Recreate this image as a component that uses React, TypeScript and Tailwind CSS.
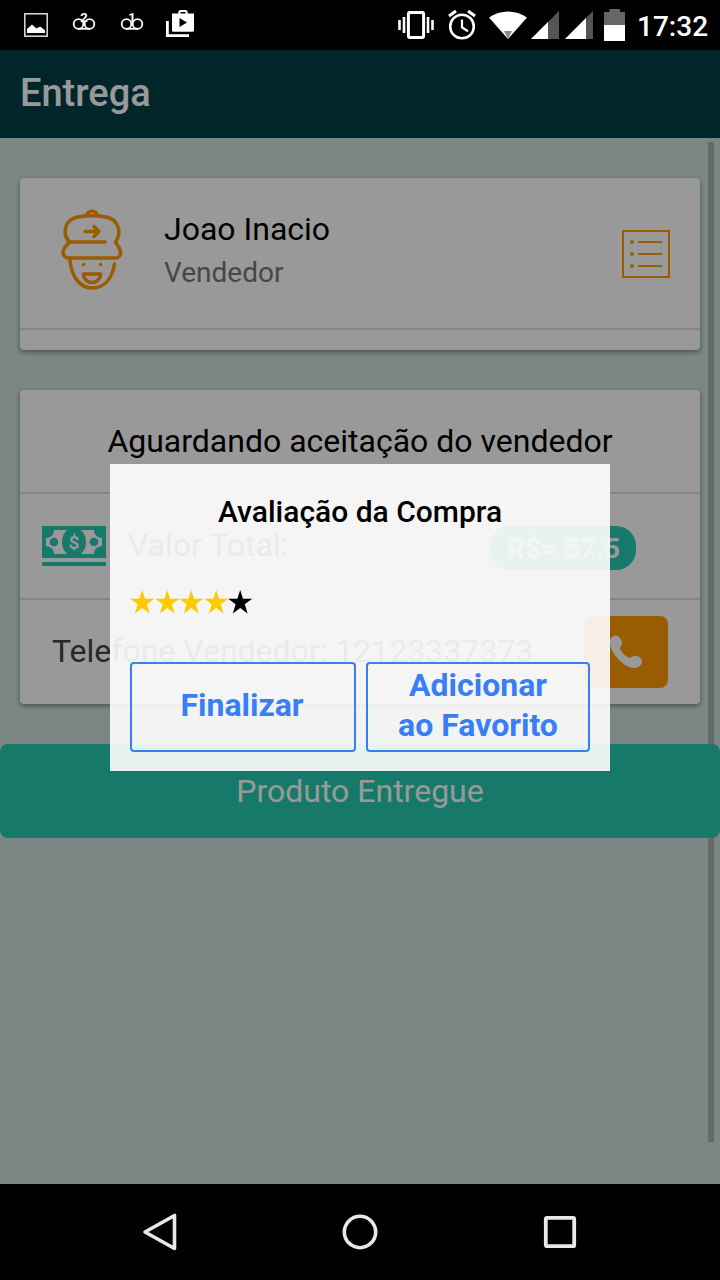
import React from "react";

interface CardProps {
  className?: string;
  children: React.ReactNode;
}

function VoicemailIcon({ line }: { line: number }) {
  return (
    <svg width="24" height="28" viewBox="0 0 24 28" fill="none" stroke="white" strokeWidth="1.8">
      <circle cx="6.5" cy="16" r="4.8" />
      <circle cx="17.5" cy="16" r="4.8" />
      <path d="M6 20.8h12" />
      <text x="12" y="14.4" textAnchor="middle" fontSize="13" fontWeight="700" fill="white" stroke="none">
        {line}
      </text>
    </svg>
  );
}

function StatusBar() {
  return (
    <div className="flex h-[50px] shrink-0 items-center bg-black pl-6 text-white">
      {/* notifications */}
      <svg width="24" height="24" viewBox="0 0 24 24">
        <rect x="0.8" y="0.8" width="22.4" height="22.4" fill="none" stroke="#ddd" strokeWidth="1.5" />
        <path d="M3 20v-4l5-4.5 4.5 4 2.5-1.5h2l4 3.5V20z" fill="white" />
      </svg>
      <div className="ml-6 -mt-[7px]">
        <VoicemailIcon line={2} />
      </div>
      <div className="ml-6 -mt-[7px]">
        <VoicemailIcon line={1} />
      </div>
      <svg className="ml-[22px] -mt-0.5" width="30" height="30" viewBox="0 0 30 30">
        <path d="M1.4 12v14.600H23" fill="none" stroke="white" strokeWidth="2.8" />
        <path
          fillRule="evenodd"
          fill="white"
          d="M6 4.500h6.300V3.200a2.200 2.200 0 0 1 2.200-2.200h5a2.200 2.200 0 0 1 2.200 2.200V4.500H28v16.700a1.500 1.500 0 0 1-1.500 1.500h-19a1.500 1.500 0 0 1-1.500-1.500zM14.500 4.500h5V3h-5zM13.500 9v9l7.500-4.500z"
        />
      </svg>
      {/* system icons */}
      <svg className="ml-auto" width="36" height="28" viewBox="0 0 36 28" fill="none" stroke="white">
        <rect x="10.400" y="1.400" width="15.200" height="25.200" rx="1.500" strokeWidth="3" />
        <path d="M6 6v16M30 6v16" strokeWidth="2.600" />
        <path d="M1.500 9v10M34.500 9v10" strokeWidth="2.600" />
      </svg>
      <svg className="ml-3.5" width="28" height="30" viewBox="0 0 28 30" fill="none" stroke="white">
        <circle cx="14" cy="16.500" r="11.800" strokeWidth="2.600" />
        <path d="M14 9.500v8l6 3.800" strokeWidth="2.200" />
        <path d="M1 6l7-5M27 6l-7-5" strokeWidth="3" />
      </svg>
      <svg className="ml-3" width="40" height="30" viewBox="0 0 40 30">
        <path d="M1 7.500C12 -.5 28 -.5 39 7.500L20 29z" fill="white" />
        <path d="M16 21h8l-4 8z" fill="#888" />
      </svg>
      <svg className="ml-0.5" width="30" height="30" viewBox="0 0 30 30">
        <path d="M29 1v28H1z" fill="#555" />
        <path d="M18 12v17H1z" fill="white" />
      </svg>
      <svg className="ml-1" width="30" height="30" viewBox="0 0 30 30">
        <path d="M29 1v28H1z" fill="#555" />
        <path d="M22 8v21H1z" fill="white" />
      </svg>
      <svg className="ml-2.5 -mt-px" width="22" height="32" viewBox="0 0 22 32">
        <path d="M5.500 0h10.500v3h5v13H0V3h5.500z" fill="#666" />
        <path d="M0 16h21v16H0z" fill="white" />
      </svg>
      <span className="mt-1 mr-3 ml-[11px] w-[71px] text-[28px] font-medium whitespace-nowrap">17:32</span>
    </div>
  );
}

function Card({ className = "", children }: CardProps) {
  return <section className={`mx-5 rounded bg-white shadow-[0_2px_5px_rgba(0,0,0,0.4)] ${className}`}>{children}</section>;
}

function SellerIcon() {
  return (
    <svg
      width="64"
      height="84"
      viewBox="0 0 64 84"
      fill="none"
      stroke="#ff9900"
      strokeWidth="3.500"
      strokeLinecap="round"
      strokeLinejoin="round"
    >
      <path d="M26.500 7c.5-6.500 10.500-6.500 11 0" />
      <path d="M45 33H9.500C2 25 4 10.500 18 8q14-2.500 28 0C59 10.500 62 24 55.500 33C59 38 63 44 59 47.500q-1 1.500-3 1.500H8.500C2 48 2 43 5 38l4.500-5" />
      <path d="M25 22.500h14M34 17.500l5 5-5 5" />
      <path d="M10 51c1 15 9 28 22 28C44 79 52 70 54.500 55" />
      <path d="M23.500 65h17c0 5-4 8.500-8.500 8.500s-8.500-3.500-8.500-8.500z" />
      <path d="M23.500 55.500h.1M40.500 55.500h.1" />
    </svg>
  );
}

function OrderListIcon() {
  return (
    <svg width="48" height="48" viewBox="0 0 48 48" fill="none" stroke="#ff9900" strokeWidth="2">
      <rect x="1" y="1" width="46" height="46" />
      <path d="M16 12h24M16 24h24M16 36h24" />
      <path d="M10 12h.01M10 24h.01M10 36h.01" strokeWidth="4" strokeLinecap="round" />
    </svg>
  );
}

function CashIcon() {
  return (
    <svg width="64" height="40" viewBox="0 0 64 40">
      <path d="M0 0h64v32H0zM0 36h64v4H0z" fill="#25cab1" />
      <path d="M12 4h40c0 3.500 2 7.500 8 8v8c-6 1-8 4-8 8H12c0-4-2-7-8-8v-8c6-.5 8-4.500 8-8z" fill="white" />
      <ellipse cx="32" cy="16" rx="12" ry="14.500" fill="#25cab1" />
      <circle cx="12" cy="16" r="4.300" fill="#25cab1" />
      <circle cx="52" cy="16" r="4.300" fill="#25cab1" />
      <text x="32" y="22.500" textAnchor="middle" fontSize="19" fontWeight="600" fill="white">
        $
      </text>
    </svg>
  );
}

function PhoneIcon() {
  return (
    <svg width="36" height="36" viewBox="0 0 36 36" fill="white">
      <path d="M7 1.500C10.500 1 14.500 6 14 10C13.700 12 12 12.500 12 14C12 17 18.500 23.500 21.500 23.800C23.500 24 24 22 27 21.800C31 21.600 34.500 25 34 28C33.500 32 29 34.500 25 34C14 32 3 19 1.800 9.500C1.500 5.500 3.500 2 7 1.500z" />
    </svg>
  );
}

function Star({ active }: { active: boolean }) {
  return (
    <svg className={active ? "text-[#ffc900]" : "text-black"} width="24.500" height="24" viewBox="0 0 24.500 24" fill="currentColor">
      <path d="M12.200 0L15 8.800h9.200L16.800 14.300l2.800 9.200-7.400-5.600-7.400 5.600 2.800-9.200L.2 8.800h9.200z" />
    </svg>
  );
}

function RatingModal({ rating }: { rating: number }) {
  return (
    <div className="absolute top-[414px] left-[110px] flex h-[307px] w-[500px] flex-col bg-white/90 px-5">
      <h2 className="mt-7 text-center text-[30px] leading-10 font-medium text-black">Avaliação da Compra</h2>
      <div className="mt-[58px] flex">
        {[1, 2, 3, 4, 5].map((n) => (
          <Star key={n} active={n <= rating} />
        ))}
      </div>
      <div className="mt-12 flex gap-2.5 text-[32px] leading-10 font-bold text-[#387ef5]">
        <button className="h-[90px] w-[226px] rounded border-2 border-[#387ef5] pr-0.5 pb-1">Finalizar</button>
        <button className="h-[90px] w-[224px] rounded border-2 border-[#387ef5] px-6 pb-1">Adicionar ao Favorito</button>
      </div>
    </div>
  );
}

function NavigationBar() {
  return (
    <div className="flex h-24 shrink-0 items-center justify-center gap-40 bg-black">
      <svg width="40" height="40" viewBox="0 0 40 40" fill="none" stroke="#e8e8e8" strokeWidth="3.600" strokeLinejoin="round">
        <path d="M34.500 3.500v33L5 20z" />
      </svg>
      <svg width="40" height="40" viewBox="0 0 40 40" fill="none" stroke="#e8e8e8" strokeWidth="3.600">
        <circle cx="20" cy="20" r="15.700" />
      </svg>
      <svg width="40" height="40" viewBox="0 0 40 40" fill="none" stroke="#e8e8e8" strokeWidth="3.800">
        <rect x="5.800" y="5.800" width="28.400" height="28.400" rx="1" />
      </svg>
    </div>
  );
}

export default function App() {
  return (
    <div className="flex h-[1280px] w-[720px] flex-col overflow-hidden font-['Roboto',sans-serif]">
      <StatusBar />
      <div className="relative flex flex-1 flex-col bg-[#cde1da]">
        <header className="flex h-[88px] items-center bg-[#003e48] px-5 pb-0.5">
          <h1 className="text-[38px] font-medium text-white">Entrega</h1>
        </header>

        {/* scroll indicator */}
        <div className="absolute top-[92px] right-1.5 h-[1000px] w-1.5 bg-[#a8b0ad]" />

        <main className="flex flex-col pt-10">
          <Card className="h-[172px]">
            <div className="flex h-[152px] items-start border-b-2 border-[#dedede] pr-[30px] pl-10">
              <div className="mt-[31px]">
                <SellerIcon />
              </div>
              <div className="mt-[31px] ml-10 flex-1">
                <h2 className="text-[32px] leading-10 text-black">Joao Inacio</h2>
                <p className="mt-1 text-[28px] leading-10 text-[#777]">Vendedor</p>
              </div>
              <div className="mt-[52px]">
                <OrderListIcon />
              </div>
            </div>
          </Card>

          <Card className="mt-10 h-[314px] text-[32px] text-[#444]">
            <div className="flex h-[104px] items-center justify-center border-b-2 border-[#dedede] text-black">
              Aguardando aceitação do vendedor
            </div>
            <div className="flex h-[106px] items-start border-b-2 border-[#dedede] pl-[22px]">
              <div className="mt-8">
                <CashIcon />
              </div>
              <div className="mt-[34px] ml-1 h-9 w-[380px] border-b-2 border-[#c8c8c8] pl-[18px] leading-[34px]">Valor Total:</div>
              <span className="mt-8 flex h-11 w-[146px] items-center justify-center rounded-[20px] bg-[#25cab1] pt-0.5 pl-px text-[28px] font-bold text-white">
                R$= 57.5
              </span>
            </div>
            <div className="flex h-[104px] items-center justify-between pr-8 pl-8">
              <span className="pb-0.5">Telefone Vendedor: 12123337373</span>
              <button className="flex h-[72px] w-[84px] items-center justify-center rounded-lg bg-[#ff9900]">
                <PhoneIcon />
              </button>
            </div>
          </Card>

          <button className="relative mt-10 h-[94px] rounded-lg bg-[#25cab1] text-[32px] text-white">Produto Entregue</button>
        </main>

        <div className="absolute inset-0 bg-black/40" />
        <RatingModal rating={4} />
      </div>
      <NavigationBar />
    </div>
  );
}
